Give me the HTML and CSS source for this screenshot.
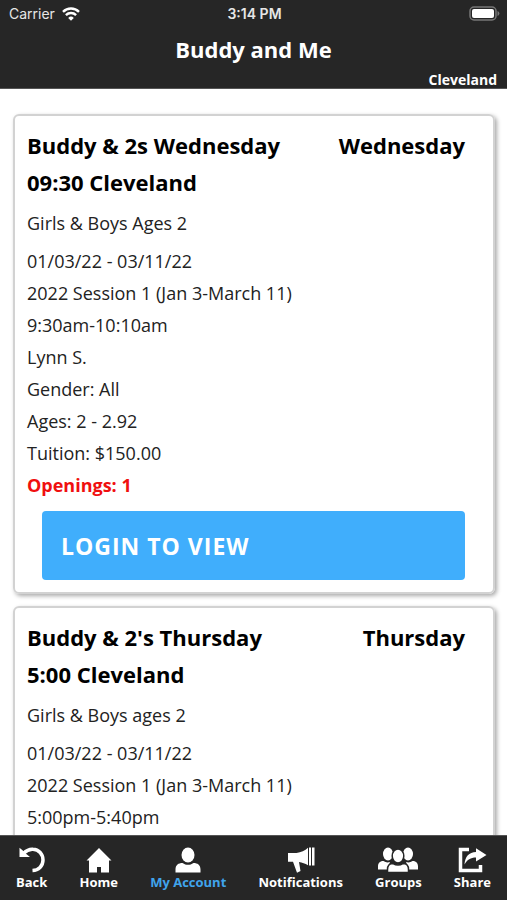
FILE: index.html
```html
<!DOCTYPE html>
<html lang="en">
<head>
<meta charset="utf-8">
<meta name="viewport" content="width=device-width, initial-scale=1">
<title>Buddy and Me</title>
<link rel="stylesheet" href="styles.css">
</head>
<body>
<header class="header">
  <div class="status">
    <div class="carrier">
      <span>Carrier</span>
      <svg width="18" height="14" viewBox="0 0 18 14" aria-hidden="true">
        <path class="wave" d="M1 4.800a11.400 11.400 0 0 1 16 0M3.900 8.100a7.200 7.200 0 0 1 10.200 0"/>
        <path class="solid" d="M6.200 10.900a4 4 0 0 1 5.600 0L9 13.700z"/>
      </svg>
    </div>
    <span class="clock">3:14 PM</span>
    <svg class="battery" width="31" height="15" viewBox="0 0 31 15" aria-hidden="true">
      <rect class="case" x="1" y="1" width="26" height="13" rx="4"/>
      <rect class="solid" x="3" y="3" width="22" height="9" rx="2"/>
      <path class="tip" d="M28.500 5a2.600 2.600 0 0 1 0 5z"/>
    </svg>
  </div>
  <h1 class="title">Buddy and Me</h1>
  <p class="place">Cleveland</p>
</header>
<main class="content">
  <article class="card">
    <div class="heading">
      <h2>Buddy &amp; 2s Wednesday<br>09:30 Cleveland</h2>
      <span class="day">Wednesday</span>
    </div>
    <p class="summary">Girls &amp; Boys Ages 2</p>
    <ul class="details">
      <li>01/03/22 - 03/11/22</li>
      <li>2022 Session 1 (Jan 3-March 11)</li>
      <li>9:30am-10:10am</li>
      <li>Lynn S.</li>
      <li>Gender: All</li>
      <li>Ages: 2 - 2.92</li>
      <li>Tuition: $150.00</li>
      <li class="openings">Openings: 1</li>
    </ul>
    <button class="login" type="button">LOGIN TO VIEW</button>
  </article>
  <article class="card">
    <div class="heading">
      <h2>Buddy &amp; 2's Thursday<br>5:00 Cleveland</h2>
      <span class="day">Thursday</span>
    </div>
    <p class="summary">Girls &amp; Boys ages 2</p>
    <ul class="details">
      <li>01/03/22 - 03/11/22</li>
      <li>2022 Session 1 (Jan 3-March 11)</li>
      <li>5:00pm-5:40pm</li>
    </ul>
  </article>
</main>
<nav class="tabs">
  <a class="tab" href="#back">
    <svg width="26" height="26" viewBox="0 0 26 26" aria-hidden="true">
      <path class="arc" d="M4.500 6.200C8 2.800 11.500 2 14 2.200c5.800.3 10 5 10 10.800 0 6-4.500 10.300-10.500 10.600"/>
      <path class="solid" d="M0.500 0.800l3 2.500 3.500 3.500 4 3.200H0.500z"/>
    </svg>
    <span>Back</span>
  </a>
  <a class="tab" href="#home">
    <svg width="26" height="26" viewBox="0 0 26 26" aria-hidden="true">
      <path class="solid" d="M13 1L.5 13.500H3V25.500h8v-5.500h4v5.500h8V13.500h2.500z"/>
    </svg>
    <span>Home</span>
  </a>
  <a class="tab active" href="#account">
    <svg width="26" height="26" viewBox="0 0 26 26" aria-hidden="true">
      <ellipse class="solid" cx="13" cy="8" rx="6.500" ry="7.500"/>
      <path class="solid" d="M.5 25.500v-3c0-4.500 3-6.500 7-6.500 2 1.400 3.500 1.800 5.500 1.800s3.500-.4 5.500-1.800c4 0 7 2 7 6.500v3z"/>
    </svg>
    <span>My Account</span>
  </a>
  <a class="tab" href="#notifications">
    <svg width="28" height="26" viewBox="0 0 28 26" aria-hidden="true">
      <path class="solid" d="M1 6h8.500C14 5.500 18 3.500 21 .8v17.400c-3-1.700-5.700-3-9-3.300l1.500 9-3.500 1.800-4-11H1zM22 .5h2v18h-2zM25 .5h2.500v18H25z"/>
    </svg>
    <span>Notifications</span>
  </a>
  <a class="tab" href="#groups">
    <svg width="40" height="26" viewBox="0 0 40 26" aria-hidden="true">
      <g class="solid">
        <ellipse cx="10" cy="7" rx="5" ry="6.500"/>
        <ellipse cx="30" cy="7" rx="5" ry="6.500"/>
        <path d="M0 22.500v-3c0-4 2.500-5.500 5.500-5.500 2 1.500 4 1.800 6.500 1l-3 7.500zM40 22.500v-3c0-4-2.500-5.500-5.500-5.500-2 1.500-4 1.800-6.500 1l3 7.500z"/>
      </g>
      <g class="outlined">
        <ellipse cx="20" cy="9" rx="5.800" ry="7"/>
        <path d="M9.500 25.500v-3c0-4.500 3-6 5.500-6 3 1.700 7 1.700 10 0 2.500 0 5.500 1.500 5.500 6v3z"/>
      </g>
    </svg>
    <span>Groups</span>
  </a>
  <a class="tab" href="#share">
    <svg width="30" height="26" viewBox="0 0 30 26" aria-hidden="true">
      <path class="frame" d="M12 2.500H3.500v21h20V18"/>
      <path class="solid" d="M19 1.200L29.500 8 19 14.500v-4c-5.500 0-8.500 2-11.500 7C8 9.500 12 5.200 19 5z"/>
    </svg>
    <span>Share</span>
  </a>
</nav>
</body>
</html>
```
FILE: styles.css
```css
* {
  box-sizing: border-box;
}

body {
  margin: 0;
  height: 100vh;
  display: flex;
  flex-direction: column;
  background: #fff;
  color: #000;
  font-family: "Open Sans", "Noto Sans", sans-serif;
}

h1,
h2,
p,
ul {
  margin: 0;
  padding: 0;
}

.header {
  flex: none;
  background: #262626;
  color: #fff;
  border-bottom: 1px solid #555;
}

.status {
  display: grid;
  grid-template-columns: 1fr auto 1fr;
  align-items: center;
  height: 27px;
  padding: 0 7px 0 9px;
  font: 14px/27px Inter, sans-serif;
  color: #e6e6e6;
}

.carrier {
  display: flex;
  align-items: center;
  gap: 7px;
}

.clock {
  font-weight: 600;
}

.battery {
  justify-self: end;
}

.solid {
  fill: #fff;
}

.wave {
  fill: none;
  stroke: #fff;
  stroke-width: 2.4;
}

.case {
  fill: none;
  stroke: #777;
  stroke-width: 1.5;
}

.tip {
  fill: #777;
}

.title {
  font-size: 22px;
  line-height: 44px;
  text-align: center;
}

.place {
  padding-right: 10px;
  font-size: 14px;
  font-weight: 700;
  line-height: 17px;
  text-align: right;
}

.content {
  flex: 1;
  min-height: 0;
  overflow: hidden;
  display: flex;
  flex-direction: column;
  gap: 12px;
  padding: 25px 12px 0 13px;
}

.card {
  flex: none;
  padding: 11px 28px 12px 12px;
  border: 2px solid #d2d2d2;
  border-radius: 6px;
  box-shadow: 2px 2px 4px #aaa;
}

.heading {
  display: flex;
  justify-content: space-between;
  font-size: 22px;
  font-weight: 700;
  line-height: 37px;
}

.heading h2 {
  font-size: inherit;
}

.summary,
.details {
  font-size: 18px;
  line-height: 32px;
  color: #222;
}

.summary {
  margin: 6px 0;
}

.details {
  list-style: none;
}

.openings {
  color: #f00f0f;
  font-weight: 700;
}

.login {
  display: block;
  width: calc(100% - 15px);
  height: 69px;
  margin: 10px 0 0 15px;
  padding: 0 19px;
  border: 0;
  border-radius: 4px;
  background: #40aefc;
  color: #fff;
  font: 700 23px/32px "Open Sans", sans-serif;
  letter-spacing: 1px;
  text-align: left;
}

.tabs {
  flex: none;
  display: flex;
  justify-content: space-between;
  height: 65px;
  padding: 11px 16px 0;
  background: #262626;
  border-top: 1px solid #555;
}

.tab {
  display: flex;
  flex-direction: column;
  align-items: center;
  color: #fff;
  font-size: 13px;
  font-weight: 700;
  line-height: 18px;
  text-decoration: none;
}

.tab.active {
  color: #40a4ec;
}

.arc {
  fill: none;
  stroke: #fff;
  stroke-width: 3.5;
}

.frame {
  fill: none;
  stroke: #fff;
  stroke-width: 3.5;
}

.outlined {
  fill: #fff;
  stroke: #262626;
  stroke-width: 1.5;
}
```
